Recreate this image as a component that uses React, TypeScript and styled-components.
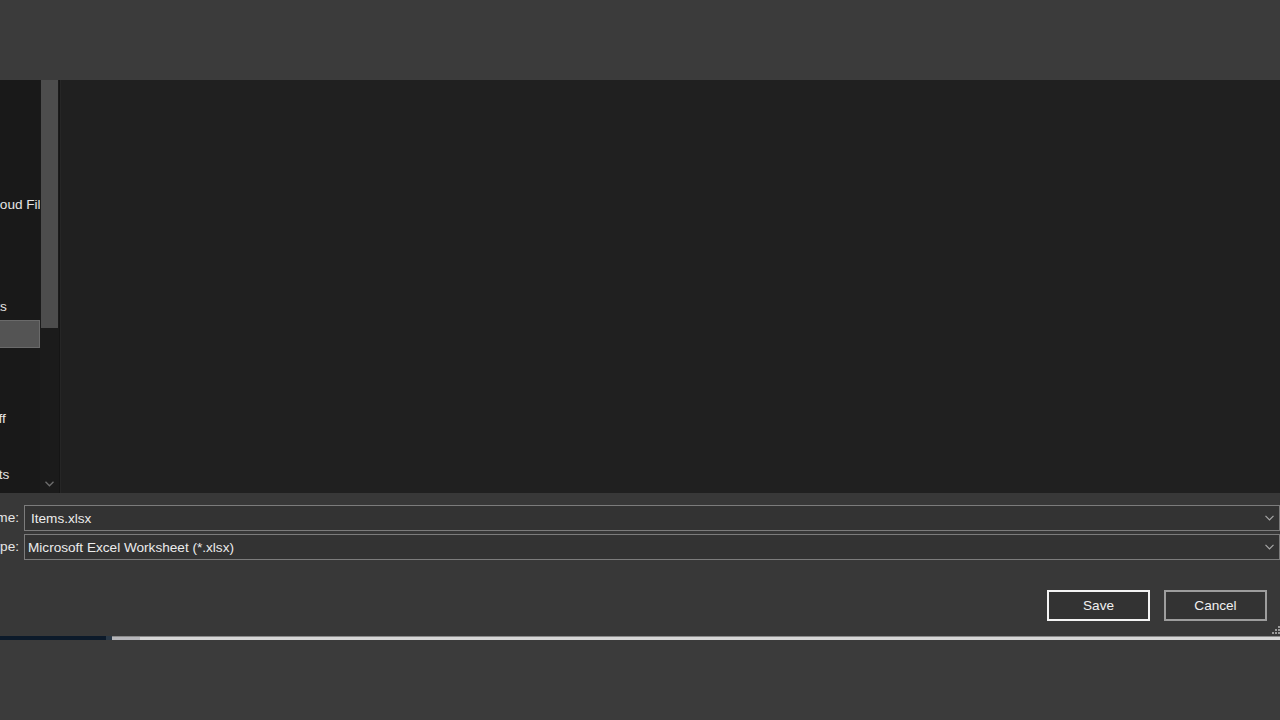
import React from "react";
import styled, { createGlobalStyle } from "styled-components";

const GlobalStyle = createGlobalStyle`
  html, body {
    margin: 0;
    padding: 0;
    background: #3b3b3b;
    overflow: hidden;
  }
  body {
    font-family: "Liberation Sans", "Noto Sans", Arial, sans-serif;
    font-size: 13.6px;
    color: #e8e8e8;
  }
`;

type NavEntry = {
  label: string;
  indent: number;
  selected?: boolean;
  gapBefore?: boolean;
};

// the dialog window is partly off screen to the left, so only the tail of
// the navigation labels shows
const navItems: NavEntry[] = [
  { label: "Quick access", indent: 20 },
  { label: "Desktop", indent: 40 },
  { label: "Music", indent: 40 },
  { label: "OneDrive", indent: 20 },
  { label: "Cloud Files", indent: 186 },
  { label: "Pictures", indent: 40 },
  { label: "Videos", indent: 40 },
  { label: "Documents", indent: 137, gapBefore: true },
  { label: "This PC", indent: 60, selected: true },
  { label: "3D Objects", indent: 60 },
  { label: "Desktop", indent: 60 },
  { label: "Stuff", indent: 177 },
  { label: "Music", indent: 60 },
  { label: "Shortcuts", indent: 151 },
];

function App() {
  return (
    <>
      <GlobalStyle />
      <S.Page>
        <S.TopBand />
        <S.Window>
          <S.Browser>
            <S.NavPane>
              <S.NavList>
                {navItems.map((item, i) => (
                  <S.NavItem
                    key={i}
                    $indent={item.indent}
                    $selected={!!item.selected}
                    $gapBefore={!!item.gapBefore}
                  >
                    {item.label}
                  </S.NavItem>
                ))}
              </S.NavList>
            </S.NavPane>
            <S.NavScroll>
              <S.Thumb />
              <S.ScrollArrow>
                <svg width="9" height="6" viewBox="0 0 9 6">
                  <polyline
                    points="0.5,0.8 4.5,4.8 8.5,0.8"
                    fill="none"
                    stroke="#6e6e6e"
                    strokeWidth="1.3"
                  />
                </svg>
              </S.ScrollArrow>
            </S.NavScroll>
            <S.FileView />
          </S.Browser>

          <S.Footer>
            <S.FieldGrid>
              <S.FieldLabel>File name:</S.FieldLabel>
              <S.Combo $editable>
                <S.ComboText>Items.xlsx</S.ComboText>
                <Chevron />
              </S.Combo>
              <S.FieldLabel>Save as type:</S.FieldLabel>
              <S.Combo>
                <S.ComboText>Microsoft Excel Worksheet (*.xlsx)</S.ComboText>
                <Chevron />
              </S.Combo>
            </S.FieldGrid>
            <S.ButtonRow>
              <S.DialogButton $primary>Save</S.DialogButton>
              <S.DialogButton>Cancel</S.DialogButton>
            </S.ButtonRow>
            <S.Grip>
              <svg width="8" height="8" viewBox="0 0 8 8">
                <rect x="6" y="0" width="2" height="2" fill="#9a9a9a" />
                <rect x="3" y="3" width="2" height="2" fill="#9a9a9a" />
                <rect x="6" y="3" width="2" height="2" fill="#9a9a9a" />
                <rect x="0" y="6" width="2" height="2" fill="#9a9a9a" />
                <rect x="3" y="6" width="2" height="2" fill="#9a9a9a" />
                <rect x="6" y="6" width="2" height="2" fill="#9a9a9a" />
              </svg>
            </S.Grip>
          </S.Footer>
        </S.Window>

        <S.Strip>
          <S.StripDark />
          <S.StripJoin />
          <S.StripLight />
        </S.Strip>
        <S.BottomBand />
      </S.Page>
    </>
  );
}

function Chevron() {
  return (
    <S.ChevronBox>
      <svg width="9" height="6" viewBox="0 0 9 6">
        <polyline
          points="0.5,0.8 4.5,4.8 8.5,0.8"
          fill="none"
          stroke="#a6a6a6"
          strokeWidth="1.2"
        />
      </svg>
    </S.ChevronBox>
  );
}

const S = {
  Page: styled.div`
    width: 1280px;
    height: 720px;
    overflow: hidden;
    display: flex;
    flex-direction: column;
    background: #3b3b3b;
  `,
  TopBand: styled.div`
    height: 80px;
    flex: none;
    background: #3b3b3b;
  `,
  Window: styled.div`
    width: 1480px;
    margin-left: -200px;
    flex: none;
    display: flex;
    flex-direction: column;
  `,
  Browser: styled.div`
    height: 413px;
    display: flex;
  `,
  NavPane: styled.div`
    width: 240px;
    flex: none;
    background: #191919;
    overflow: hidden;
  `,
  NavList: styled.div`
    margin-top: -2px;
    display: flex;
    flex-direction: column;
  `,
  NavItem: styled.div<{ $indent: number; $selected: boolean; $gapBefore: boolean }>`
    box-sizing: border-box;
    height: 28px;
    line-height: 27px;
    padding-left: ${(p) => p.$indent}px;
    margin-top: ${(p) => (p.$gapBefore ? "18px" : "0")};
    white-space: nowrap;
    color: #e6e6e6;
    border: 1px solid ${(p) => (p.$selected ? "#6a6a6a" : "transparent")};
    background: ${(p) => (p.$selected ? "#545454" : "transparent")};
  `,
  NavScroll: styled.div`
    width: 20px;
    flex: none;
    box-sizing: border-box;
    background: #1b1b1b;
    border-right: 1px solid #151515;
    display: flex;
    flex-direction: column;
    align-items: center;
  `,
  Thumb: styled.div`
    width: 17px;
    height: 248px;
    background: #4d4d4d;
  `,
  ScrollArrow: styled.div`
    margin-top: auto;
    margin-bottom: 6px;
    display: flex;
  `,
  FileView: styled.div`
    flex: 1;
    background: #202020;
    border-left: 1px solid #262626;
  `,
  Footer: styled.div`
    position: relative;
    height: 143px;
    box-sizing: border-box;
    padding-top: 12px;
    background: #383838;
  `,
  FieldGrid: styled.div`
    display: grid;
    grid-template-columns: 219px 1fr;
    column-gap: 5px;
    row-gap: 3px;
  `,
  FieldLabel: styled.div`
    text-align: right;
    line-height: 26px;
    white-space: nowrap;
    color: #e6e6e6;
  `,
  Combo: styled.div<{ $editable?: boolean }>`
    height: 26px;
    box-sizing: border-box;
    display: flex;
    align-items: center;
    padding-left: ${(p) => (p.$editable ? "6px" : "3px")};
    padding-right: 5px;
    background: #333333;
    border: 1px solid #7c7c7c;
  `,
  ComboText: styled.span`
    flex: 1;
    white-space: nowrap;
    color: #ececec;
  `,
  ChevronBox: styled.span`
    display: flex;
  `,
  ButtonRow: styled.div`
    margin-top: 30px;
    display: flex;
    justify-content: flex-end;
    gap: 14px;
    padding-right: 13px;
  `,
  DialogButton: styled.button<{ $primary?: boolean }>`
    width: 103px;
    height: 31px;
    box-sizing: border-box;
    background: #333333;
    color: #f0f0f0;
    font-family: inherit;
    font-size: 13.6px;
    border: 2px solid ${(p) => (p.$primary ? "#f4f4f4" : "#9d9d9d")};
    padding: 0;
  `,
  Grip: styled.div`
    position: absolute;
    right: 0;
    bottom: 2px;
    display: flex;
  `,
  Strip: styled.div`
    height: 4px;
    flex: none;
    display: flex;
  `,
  StripDark: styled.div`
    width: 106px;
    background: #0c1a2a;
  `,
  StripJoin: styled.div`
    width: 6px;
    background: #2a3846;
  `,
  StripLight: styled.div`
    flex: 1;
    box-sizing: border-box;
    border-top: 1px solid #8a8a8a;
    background: linear-gradient(to right, #b6b6ba 0, #b6b6ba 28px, #d6d6d6 28px);
  `,
  BottomBand: styled.div`
    flex: 1;
    background: #3b3b3b;
  `,
};

export default App;
